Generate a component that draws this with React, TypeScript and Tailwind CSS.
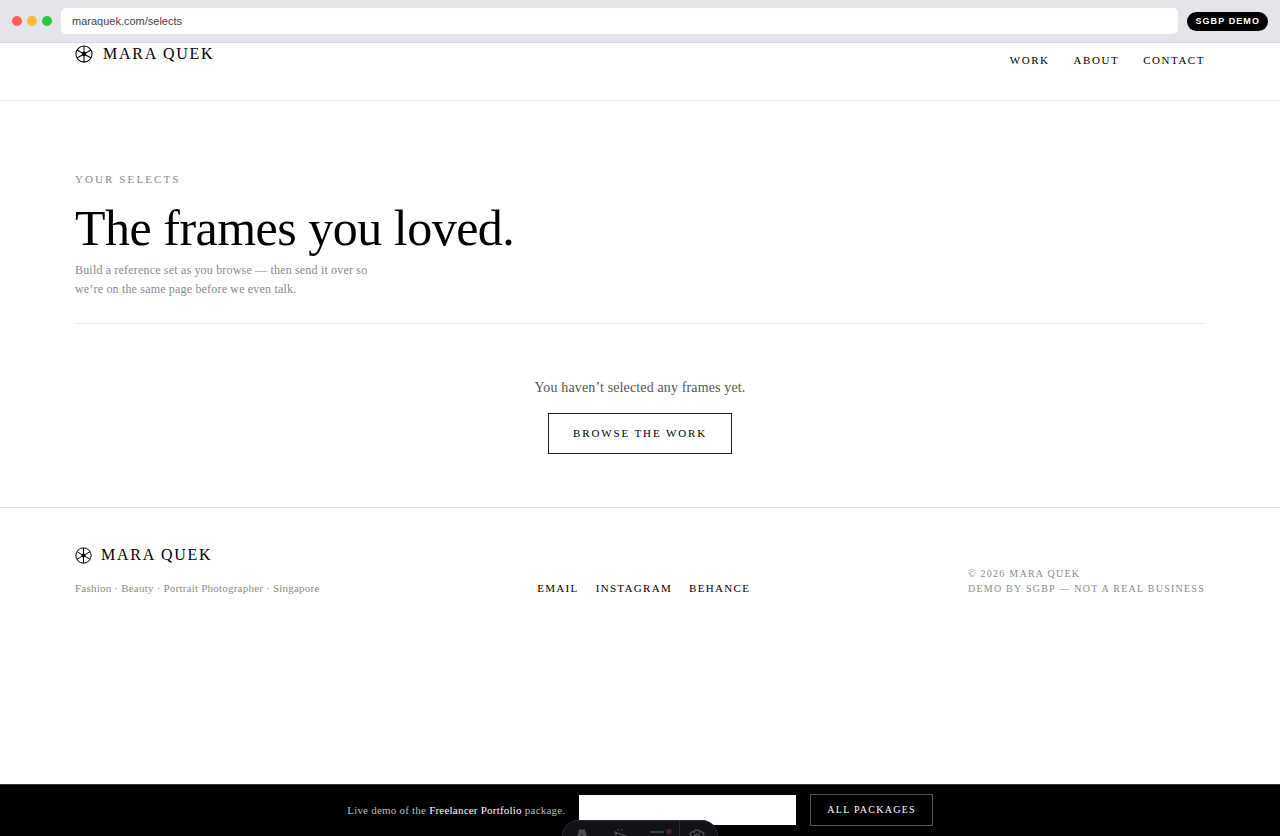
function Aperture({ className }: { className: string }) {
  return (
    <svg
      className={className}
      viewBox="0 0 24 24"
      fill="none"
      stroke="currentColor"
      strokeWidth={1.4}
    >
      <circle cx="12" cy="12" r="10.8" />
      <path d="M12 1.2v21.600M2.700 6.600l18.600 10.800M21.300 6.600L2.700 17.400" />
      <circle cx="12" cy="12" r="2.2" fill="currentColor" />
    </svg>
  );
}

function Brand({ small = false }: { small?: boolean }) {
  return (
    <a
      href="#home"
      className={`flex items-center text-black ${small ? 'gap-[9px]' : 'gap-2.5'}`}
    >
      <Aperture
        className={`shrink-0 ${small ? 'h-[17px] w-[17px]' : 'h-[18px] w-[18px]'}`}
      />
      <span className="text-base leading-5 tracking-[0.11em]">MARA QUEK</span>
    </a>
  );
}

function BrowserBar() {
  return (
    <div className="flex h-[43px] items-center border-b border-[#d5d7dc] bg-[#e4e5eb] px-3">
      <div className="mr-[9px] flex gap-[5px]">
        <span className="h-2.5 w-2.5 rounded-full bg-[#ff5f57]" />
        <span className="h-2.5 w-2.5 rounded-full bg-[#febc2e]" />
        <span className="h-2.5 w-2.5 rounded-full bg-[#28c840]" />
      </div>
      <input
        type="text"
        aria-label="Address"
        defaultValue="maraquek.com/selects"
        className="h-[26px] min-w-0 flex-1 rounded-[5px] bg-white px-[11px] font-['Liberation_Sans',sans-serif] text-[11px] text-[#444] outline-none"
      />
      <span className="ml-[9px] rounded-full bg-black px-2 font-['Liberation_Sans',sans-serif] text-[9px] leading-[19px] font-bold tracking-[0.12em] text-white">
        SGBP DEMO
      </span>
    </div>
  );
}

function SiteHeader() {
  return (
    <header className="flex h-[58px] items-start justify-between border-b border-[#e8e8e8] px-[75px] pt-px">
      <Brand />
      <nav className="flex gap-6 pt-2 text-[11px] leading-4 tracking-[0.14em] text-black">
        <a href="#work">WORK</a>
        <a href="#about">ABOUT</a>
        <a href="#contact">CONTACT</a>
      </nav>
    </header>
  );
}

function Selects() {
  return (
    <main className="px-[75px] pt-[70px] pb-[53px]">
      <p className="text-[11px] leading-4 tracking-[0.19em] text-[#8a8a8a]">
        YOUR SELECTS
      </p>
      <h1 className="mt-4 text-[50px] leading-[50px] tracking-[-0.01em] text-black">
        The frames you loved.
      </h1>
      <p className="mt-2 max-w-[300px] text-xs leading-[19px] tracking-[0.015em] text-[#8a8a8a]">
        Build a reference set as you browse — then send it over so we’re on the
        same page before we even talk.
      </p>
      <section className="mt-6 flex flex-col items-center border-t border-[#e8e8e8] pt-[54px]">
        <p className="text-sm leading-5 tracking-[0.01em] text-[#555]">
          You haven’t selected any frames yet.
        </p>
        <a
          href="#work"
          className="mt-[15px] border border-[#222] px-6 py-3 text-[11px] leading-[15px] tracking-[0.17em] text-black"
        >
          BROWSE THE WORK
        </a>
      </section>
    </main>
  );
}

function SiteFooter() {
  return (
    <footer className="flex items-end justify-between border-t border-[#e4e4e4] px-[75px] pt-[37px] pb-10">
      <div>
        <Brand small />
        <p className="mt-[15px] text-[11px] leading-4 tracking-[0.02em] text-[#8a8a8a]">
          Fashion · Beauty · Portrait Photographer · Singapore
        </p>
      </div>
      <nav className="flex gap-[17px] text-[11px] leading-4 tracking-[0.12em] text-black">
        <a href="#email">EMAIL</a>
        <a href="#instagram">INSTAGRAM</a>
        <a href="#behance">BEHANCE</a>
      </nav>
      <p className="text-[10px] leading-[15px] tracking-[0.125em] text-[#8a8a8a]">
        © 2026 MARA QUEK
        <br />
        DEMO BY SGBP — NOT A REAL BUSINESS
      </p>
    </footer>
  );
}

function FloatingToolbar() {
  return (
    <div className="absolute bottom-0 left-1/2 flex h-4 w-[156px] -translate-x-1/2 overflow-hidden rounded-t-[20px] border border-b-0 border-[#26272c] bg-[#111217] text-[#4b4c52]">
      <button
        type="button"
        aria-label="Text"
        className="flex flex-1 items-start justify-center pt-2"
      >
        <svg className="h-4 w-4 shrink-0" viewBox="0 0 16 16" fill="currentColor">
          <path d="M5 .5h6L15 15h-4l-1-4H6l-1 4H1zM8 4L6.800 8.500h2.400z" />
        </svg>
      </button>
      <button
        type="button"
        aria-label="Pointer"
        className="flex flex-1 items-start justify-center pt-2"
      >
        <svg
          className="h-4 w-4 shrink-0"
          viewBox="0 0 16 16"
          fill="none"
          stroke="currentColor"
          strokeWidth={1.300}
        >
          <path d="M2 3l12 4.500-5 2-2.500 5zM5 0l.5 1.500M9 0l-.5 1.500" />
        </svg>
      </button>
      <button
        type="button"
        aria-label="Menu"
        className="flex flex-1 items-start justify-center pt-2"
      >
        <svg
          className="h-4 w-6 shrink-0"
          viewBox="0 0 24 16"
          fill="none"
          stroke="currentColor"
          strokeWidth={1.500}
        >
          <path d="M2 3h14M2 8h14" />
          <circle cx="21" cy="2.500" r="2.700" fill="#4a1f2e" stroke="none" />
        </svg>
      </button>
      <button
        type="button"
        aria-label="Settings"
        className="flex w-[38px] items-start justify-center border-l border-[#2b2c31] pt-2 pr-1"
      >
        <svg
          className="h-4 w-4 shrink-0"
          viewBox="0 0 16 16"
          fill="none"
          stroke="currentColor"
          strokeWidth={1.500}
        >
          <path d="M5.500 3L6 1.200h4l.5 1.800 2-.5L15 5l-1 2 1.500 1L14 9l1 2-2.500 2.500-2-.5L10 15H6l-.5-2-2 .5L1 11l1-2-1.500-1L2 7 1 5l2.500-2.500z" />
          <circle cx="8" cy="8" r="2.800" />
        </svg>
      </button>
    </div>
  );
}

function DemoBar() {
  return (
    <aside className="relative flex h-[52px] items-center justify-center border-t border-[#333] bg-black pb-px">
      <p className="mr-[14px] text-[11px] leading-4 tracking-[0.02em] text-[#bbb]">
        Live demo of the <span className="text-white">Freelancer Portfolio</span>{' '}
        package.
      </p>
      <a
        href="#package"
        aria-label="Freelancer Portfolio package"
        className="mr-[14px] h-[30px] w-[217px] bg-white"
      />
      <a
        href="#packages"
        className="border border-[#555] px-4 py-[7px] text-[10px] leading-4 tracking-[0.125em] text-white"
      >
        ALL PACKAGES
      </a>
      <FloatingToolbar />
    </aside>
  );
}

export default function App() {
  return (
    <div className="flex min-h-screen flex-col bg-white font-['Liberation_Serif',serif]">
      <BrowserBar />
      <SiteHeader />
      <div className="flex-1">
        <Selects />
        <SiteFooter />
      </div>
      <DemoBar />
    </div>
  );
}
